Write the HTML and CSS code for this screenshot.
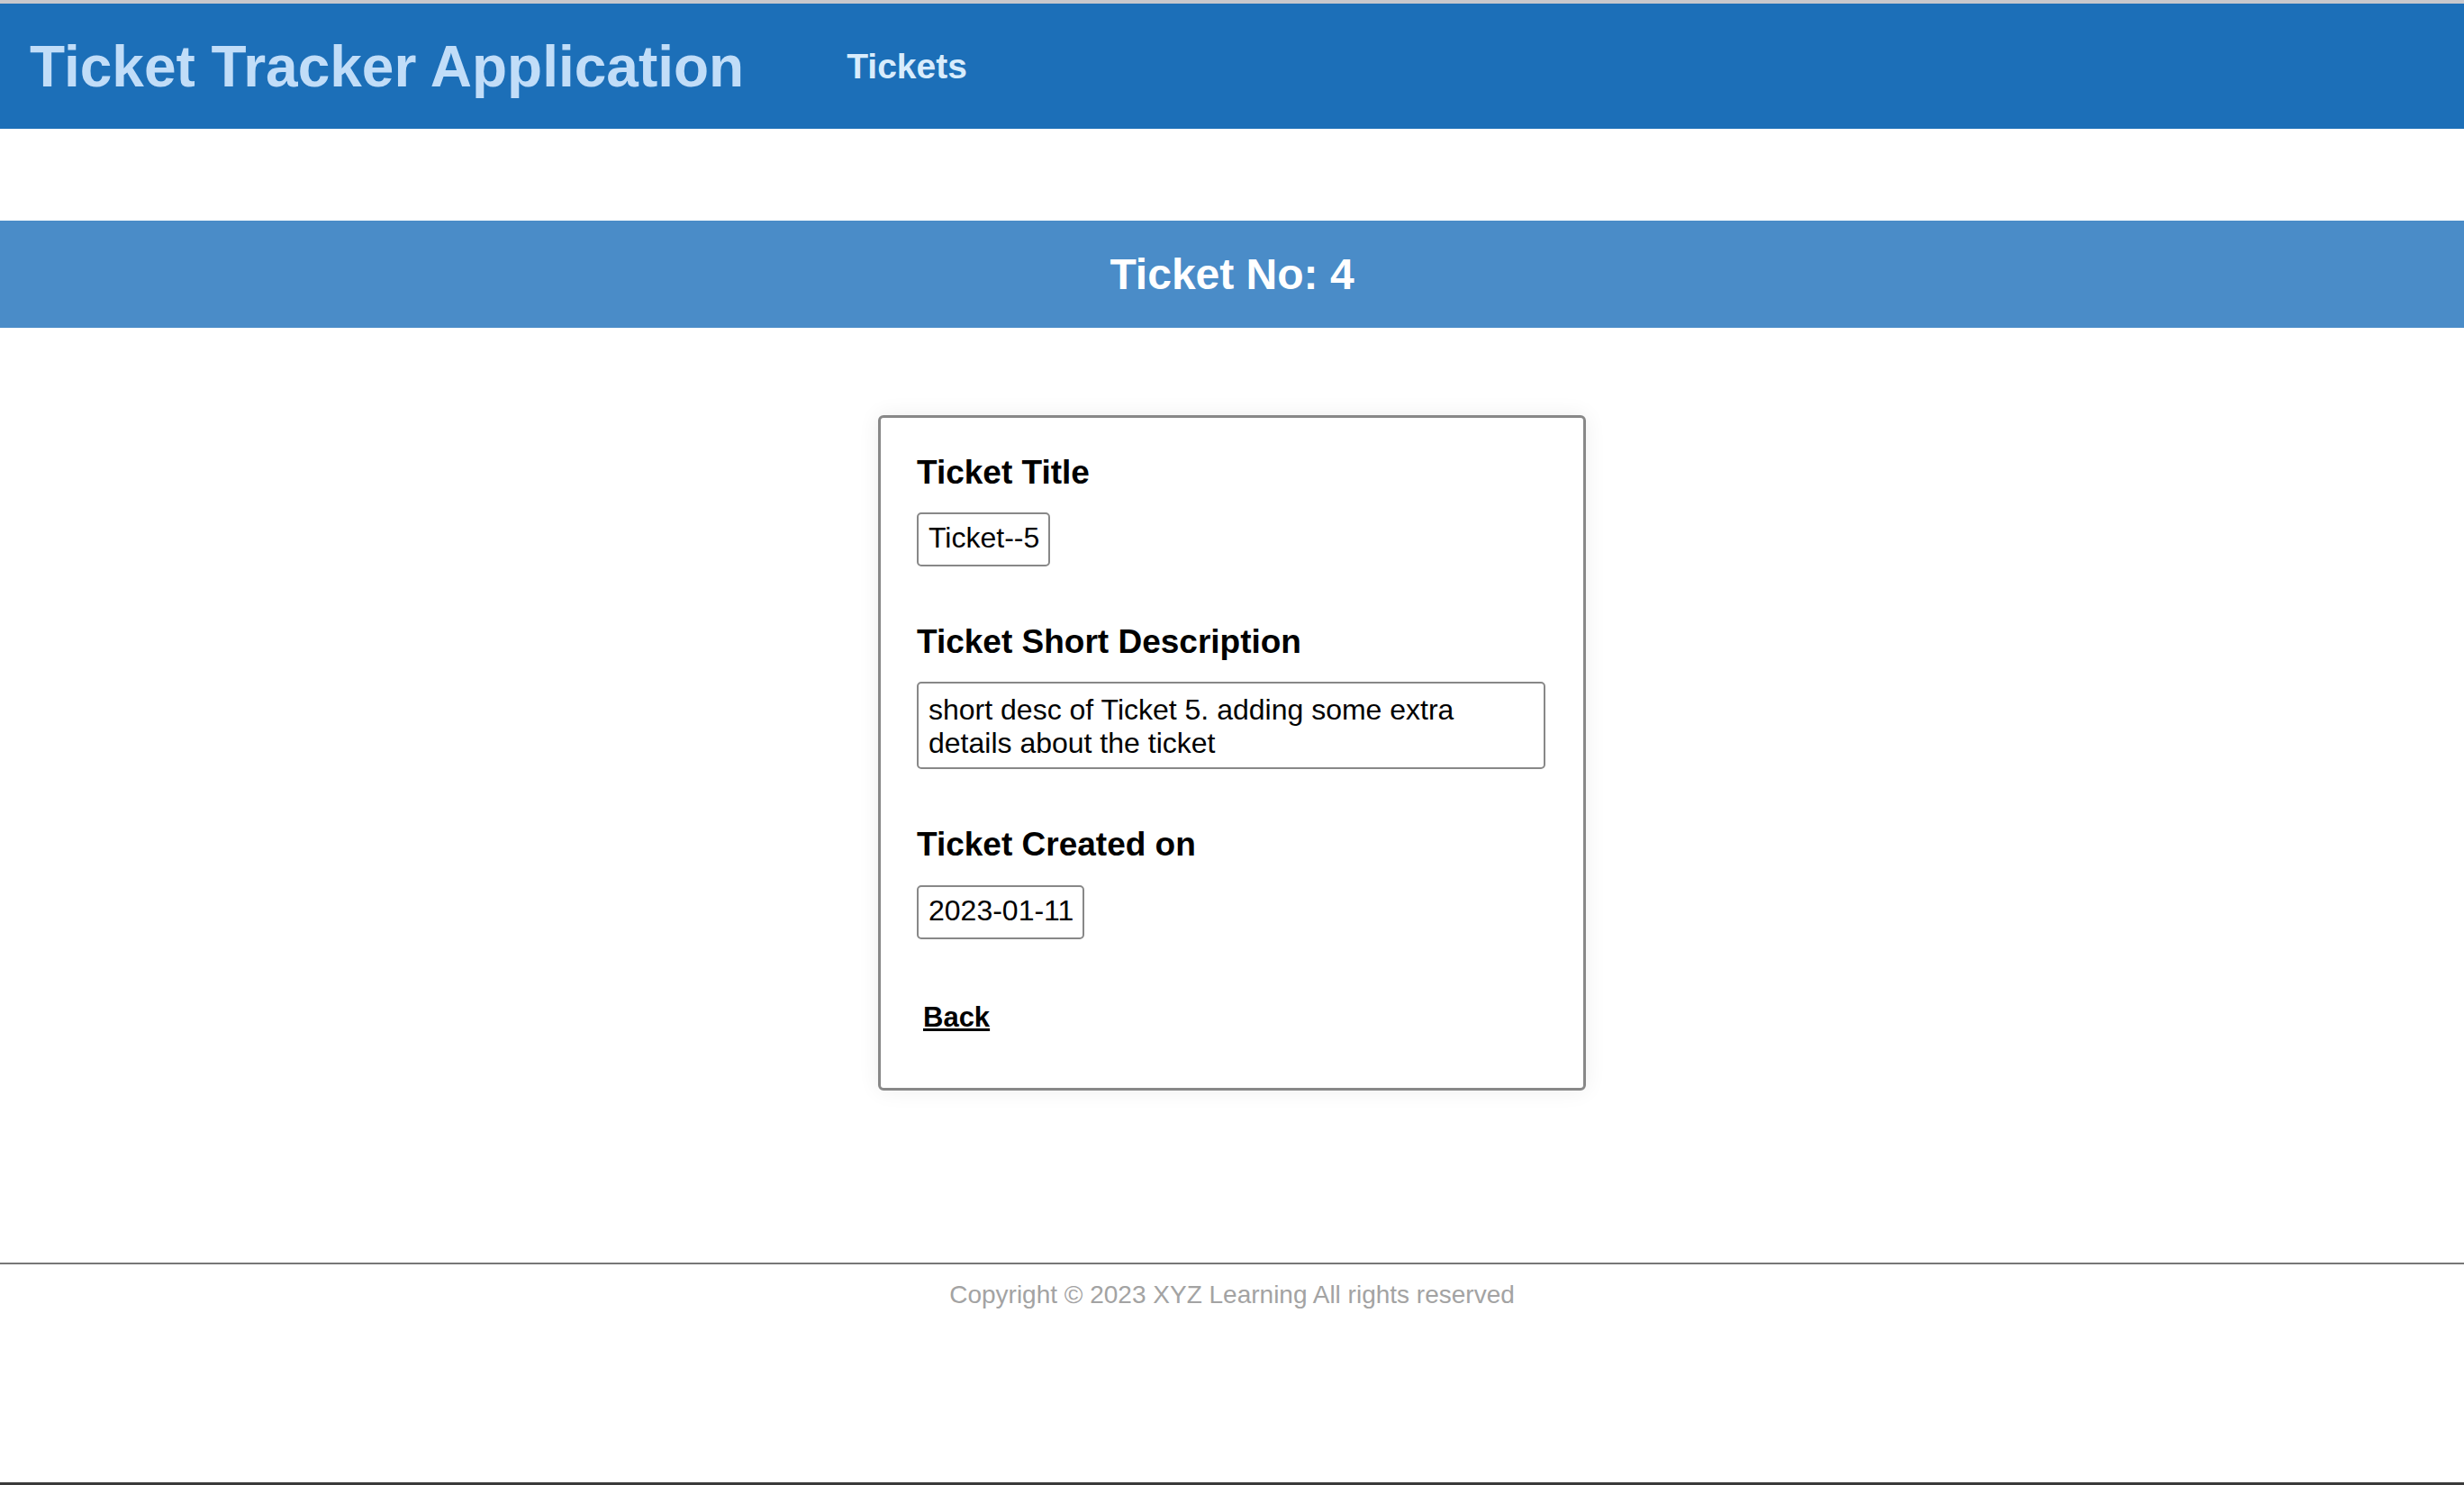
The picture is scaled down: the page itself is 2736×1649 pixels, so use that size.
FILE: index.html
```html
<!DOCTYPE html>
<html lang="en">
<head>
<meta charset="utf-8">
<title>Ticket Tracker Application</title>
<link rel="stylesheet" href="styles.css">
</head>
<body>
  <header class="topbar">
    <span class="brand">Ticket Tracker Application</span>
    <nav class="nav"><a class="nav-link" href="#">Tickets</a></nav>
  </header>
  <main class="main">
    <h1 class="band">Ticket No: 4</h1>
    <section class="card">
      <h2 class="label">Ticket Title</h2>
      <div class="field">Ticket--5</div>
      <h2 class="label">Ticket Short Description</h2>
      <div class="field field-block">short desc of Ticket 5. adding some extra details about the ticket</div>
      <h2 class="label label-last">Ticket Created on</h2>
      <div class="field field-last">2023-01-11</div>
      <div class="actions"><a class="back" href="#">Back</a></div>
    </section>
  </main>
  <footer class="footer">Copyright &copy; 2023 XYZ Learning All rights reserved</footer>
  <div class="spacer"></div>
</body>
</html>
```
FILE: styles.css
```css
html, body {
  margin: 0;
  padding: 0;
}
body {
  font-family: "Liberation Sans", Arial, sans-serif;
  background: #ffffff;
  color: #000;
  min-height: 100vh;
  box-sizing: border-box;
  display: flex;
  flex-direction: column;
  border-top: 4px solid #c8c8cc;
  border-bottom: 3px solid #3a3a3a;
}
.topbar {
  height: 139px;
  background: #1c6fb8;
  display: flex;
  align-items: center;
  padding-left: 33px;
  box-sizing: border-box;
}
.brand {
  font-size: 64px;
  font-weight: bold;
  color: #c1ddf8;
  white-space: nowrap;
}
.nav {
  margin-left: 114px;
}
.nav-link {
  font-size: 39px;
  font-weight: bold;
  color: #d8ecfc;
  text-decoration: none;
}
.main {
  display: flex;
  flex-direction: column;
}
.band {
  margin: 102px 0 0 0;
  height: 119px;
  background: #4a8cc8;
  color: #ffffff;
  font-size: 48px;
  font-weight: bold;
  display: flex;
  align-items: center;
  justify-content: center;
}
.card {
  width: 786px;
  box-sizing: border-box;
  margin: 97px auto 0 auto;
  border: 3px solid #888888;
  border-radius: 6px;
  padding: 40px 42px 55px 40px;
  box-shadow: 0 0 24px rgba(0, 0, 0, 0.07);
  display: flex;
  flex-direction: column;
  align-items: flex-start;
}
.label {
  margin: 0 0 24px 0;
  font-size: 37px;
  line-height: 41px;
  font-weight: bold;
}
.label-last {
  margin-bottom: 25px;
}
.field {
  border: 2px solid #888888;
  border-radius: 5px;
  font-size: 32px;
  line-height: 36px;
  padding: 8px 10px 12px 11px;
  margin-bottom: 63px;
}
.field-block {
  align-self: stretch;
  line-height: 37px;
  padding: 11px 16px 8px 11px;
}
.field-last {
  margin-bottom: 0;
}
.actions {
  margin-top: 69px;
  margin-left: 7px;
  line-height: 36px;
}
.back {
  font-size: 31px;
  font-weight: bold;
  color: #000;
  text-decoration: underline;
}
.footer {
  margin-top: 191px;
  border-top: 2px solid #777777;
  padding-top: 18px;
  text-align: center;
  font-size: 28px;
  color: #a3a3a3;
}
.spacer {
  flex: 1;
}
```
